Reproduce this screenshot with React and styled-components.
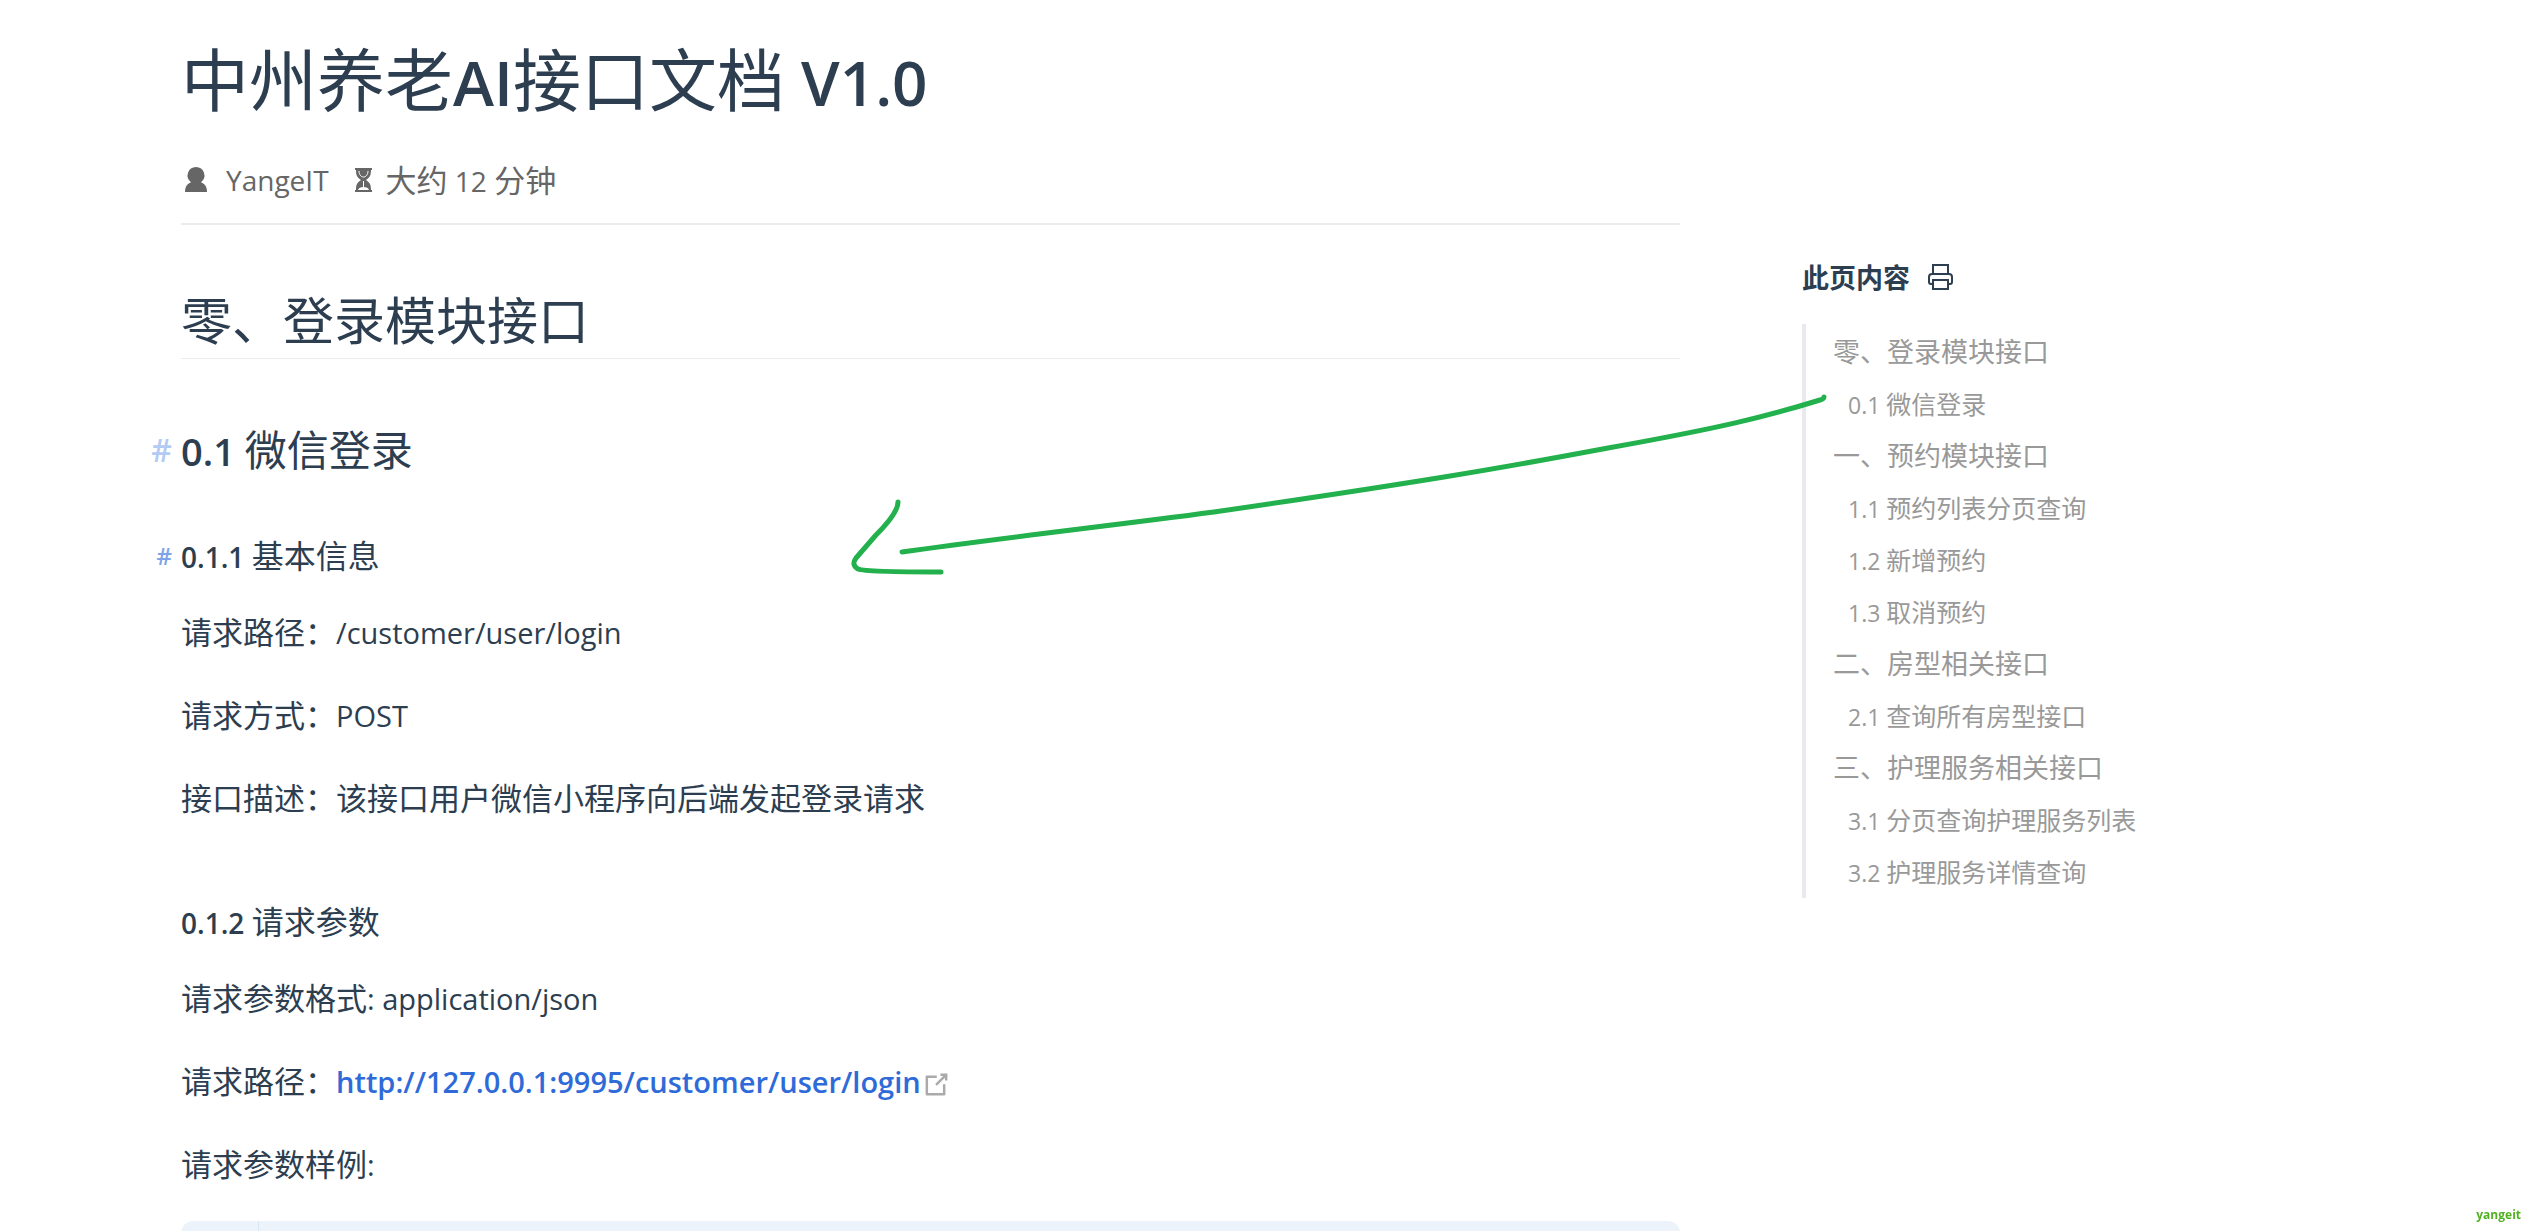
import React from 'react';
import styled, { createGlobalStyle, css } from 'styled-components';

const GlobalStyle = createGlobalStyle`
  * {
    box-sizing: border-box;
  }
  html, body {
    margin: 0;
    background-color: #fff;
  }
  body {
    color: #2c3e50;
    font-family: 'Open Sans', 'Noto Sans CJK SC', sans-serif;
    font-size: 31px;
    overflow: hidden;
  }
  a {
    color: inherit;
    text-decoration: none;
  }
`;

const toc = [
  { text: '零、登录模块接口' },
  { num: '0.1', text: '微信登录' },
  { text: '一、预约模块接口' },
  { num: '1.1', text: '预约列表分页查询' },
  { num: '1.2', text: '新增预约' },
  { num: '1.3', text: '取消预约' },
  { text: '二、房型相关接口' },
  { num: '2.1', text: '查询所有房型接口' },
  { text: '三、护理服务相关接口' },
  { num: '3.1', text: '分页查询护理服务列表' },
  { num: '3.2', text: '护理服务详情查询' },
];

const UserIcon = () => (
  <svg width="26" height="26" viewBox="0 0 26 26" fill="currentColor" aria-hidden="true">
    <path d="M15 0a8.500 8.500 0 0 1 5 15.300C24 17 26 20 26 25H4c0-5 2-8 6-9.700A8.500 8.500 0 0 1 15 0z" />
  </svg>
);

const HourglassIcon = () => (
  <svg width="17" height="26" viewBox="0 0 17 26" aria-hidden="true">
    <path fill="currentColor" d="M0 1h17v2h-1c0 5-1 7.500-5 10 4 2.500 5 5 5 10h1v2H0v-2h1c0-5 1-7.500 5-10C2 10.500 1 8 1 3H0z" />
    <path fill="none" stroke="#fff" d="M4 4c0 3.500 2 6 4.500 6S13 7.500 13 4M8.500 14v6" />
    <path fill="#fff" d="M3 23c.5-2 2.500-3 5.500-3s5 1 5.500 3z" />
  </svg>
);

const PrintIcon = () => (
  <svg width="25" height="26" viewBox="0 0 25 26" fill="none" stroke="currentColor" strokeWidth="2" aria-hidden="true">
    <path d="M5 10V1h15v9" />
    <path d="M5 20H3q-2 0-2-2v-5q0-3 3-3h17q3 0 3 3v5q0 2-2 2h-2" />
    <path d="M5 16h15v9H5z" />
  </svg>
);

const ExternalIcon = () => (
  <svg width="31" height="31" viewBox="0 0 100 100" fill="#aaa" aria-hidden="true">
    <path d="M18.800 85.100h56c2.200 0 4-1.800 4-4v-32h-8v28h-48v-48h28v-8h-32c-2.200 0-4 1.800-4 4v56c0 2.200 1.800 4 4 4z" />
    <path d="M45.700 48.700l5.600 5.600 25.900-25.800v8.700h8V14.900H62.800v8h8.700z" />
  </svg>
);

const Arrow = () => (
  <Annotation viewBox="840 390 1000 190" aria-hidden="true">
    <path d="M1824 397q0 2-4 3C1765 417 1720 428 1608 448C1560 457 1500 468 1444 477C1370 489 1290 501 1214 512C1100 527 1000 538 902 552" />
    <path d="M898 502C898 512 885 526 876 535L856 558Q851 565 858 569Q866 572 941 572" />
  </Annotation>
);

const App = () => {
  return (
    <>
      <GlobalStyle />
      <Page>
        <Article>
          <Title>中州养老<Latin $size={62}>AI</Latin>接口文档<Latin $size={62}> V1.0</Latin></Title>
          <Meta>
            <MetaItem $gap="19px"><UserIcon /><Latin $size={28} $weight={400}>YangeIT</Latin></MetaItem>
            <MetaItem $gap="14px">
              <HourglassIcon />
              <span>大约<Latin $size={28} $weight={400}> 12 </Latin>分钟</span>
            </MetaItem>
          </Meta>
          <Heading2>零、登录模块接口</Heading2>
          <Heading3 id="s01"><Anchor href="#s01">#</Anchor><Latin $size={38}>0.1 </Latin>微信登录</Heading3>
          <Heading4 id="s011"><Anchor href="#s011" $small>#</Anchor><Latin $size={28}>0.1.1 </Latin>基本信息</Heading4>
          <Text>请求路径：<Latin $size={29} $weight={400}>/customer/user/login</Latin></Text>
          <Text>请求方式：<Latin $size={29} $weight={400}>POST</Latin></Text>
          <Text>接口描述：该接口用户微信小程序向后端发起登录请求</Text>
          <Heading4><Latin $size={28}>0.1.2 </Latin>请求参数</Heading4>
          <Text>请求参数格式<Latin $size={29} $weight={400}>: application/json</Latin></Text>
          <Text>
            请求路径：<Link href="http://127.0.0.1:9995/customer/user/login"><Latin $size={29}>http://127.0.0.1:9995/customer/user/login</Latin><ExternalIcon /></Link>
          </Text>
          <Text>请求参数样例<Latin $size={29} $weight={400}>:</Latin></Text>
          <CodeBlock><Gutter /></CodeBlock>
        </Article>
        <Aside>
          <TocHeader>
            此页内容
            <PrintButton aria-label="打印"><PrintIcon /></PrintButton>
          </TocHeader>
          <TocList>
            {toc.map(({ num, text }) => (
              <TocItem key={num || text} $sub={!!num}>
                <a href="#s01">{num && <Latin $size={23} $weight={500}>{num} </Latin>}{text}</a>
              </TocItem>
            ))}
          </TocList>
        </Aside>
        <Arrow />
      </Page>
      <Watermark>yangeit</Watermark>
    </>
  );
}

const Page = styled.div`
  display: flex;
  gap: 122px;
  height: 100vh;
  padding-left: 181px;
  position: relative;
  overflow: hidden;
`;

const Article = styled.main`
  flex: 1;
  min-width: 0;
  padding-top: 40px;
`;

// latin runs are set a little smaller than the chinese text around them
const Latin = styled.span`
  font-size: ${props => props.$size}px;
  font-weight: ${props => props.$weight || 600};
  line-height: 1;
`;

const Title = styled.h1`
  margin: 0 0 40px;
  font-size: 68px;
  font-weight: 400;
  line-height: 80px;
`;

const Meta = styled.div`
  display: flex;
  gap: 26px;
  padding-bottom: 23px;
  border-bottom: 2px solid #eaecef;
  color: #666;
  line-height: 40px;
`;

const MetaItem = styled.div`
  display: flex;
  align-items: center;
  gap: ${props => props.$gap};
`;

const Heading2 = styled.h2`
  margin: 63px 0 0;
  padding-bottom: 6px;
  border-bottom: 1px solid #eaecef;
  font-size: 51px;
  font-weight: 400;
  line-height: 64px;
`;

const Heading3 = styled.h3`
  position: relative;
  margin: 65px 0 60px;
  font-size: 42px;
  font-weight: 400;
  line-height: 52px;
`;

const Heading4 = styled.h4`
  position: relative;
  margin: 78px 0 30px;
  font-size: 32px;
  font-weight: 400;
  line-height: 40px;
  ${Heading3} + & {
    margin-top: 0;
  }
`;

const Anchor = styled.a`
  position: absolute;
  right: 100%;
  padding-right: 9px;
  color: #b3cbf3;
  font-size: 32px;
  font-weight: 600;
  ${props => props.$small && css`
    color: #7ea3e9;
    font-size: 24px;
  `}
`;

const Text = styled.p`
  margin: 0 0 31px;
  line-height: 52px;
`;

const Link = styled.a`
  color: #2f6bd8;
  svg {
    vertical-align: middle;
  }
`;

const CodeBlock = styled.pre`
  display: flex;
  height: 300px;
  margin: 0;
  border-radius: 12px;
  background-color: #ecf3fa;
`;

const Gutter = styled.div`
  width: 78px;
  border-right: 1px solid #d8e6f4;
`;

const Aside = styled.aside`
  width: 730px;
  padding-top: 256px;
`;

const TocHeader = styled.div`
  display: flex;
  align-items: center;
  gap: 18px;
  height: 40px;
  margin-bottom: 28px;
  font-size: 27px;
  font-weight: 700;
`;

const PrintButton = styled.button`
  display: flex;
  padding: 2px 0 0;
  border: 0;
  background: none;
  color: #2c3e50;
  cursor: pointer;
`;

const TocList = styled.ul`
  margin: 0;
  padding: 2px 0 0 27px;
  border-left: 4px solid #e9eaef;
  list-style: none;
`;

const TocItem = styled.li`
  color: #999;
  font-size: 27px;
  line-height: 52px;
  ${props => props.$sub && css`
    padding-left: 15px;
    font-size: 25px;
  `}
`;

const Annotation = styled.svg`
  position: absolute;
  top: 390px;
  left: 840px;
  width: 1000px;
  height: 190px;
  fill: none;
  stroke: #22b14c;
  stroke-width: 5;
  stroke-linecap: round;
  stroke-linejoin: round;
  pointer-events: none;
`;

const Watermark = styled.div`
  position: fixed;
  right: 11px;
  bottom: 8px;
  color: #52b122;
  font-size: 12px;
  font-weight: 700;
  line-height: 16px;
`;

export default App;
